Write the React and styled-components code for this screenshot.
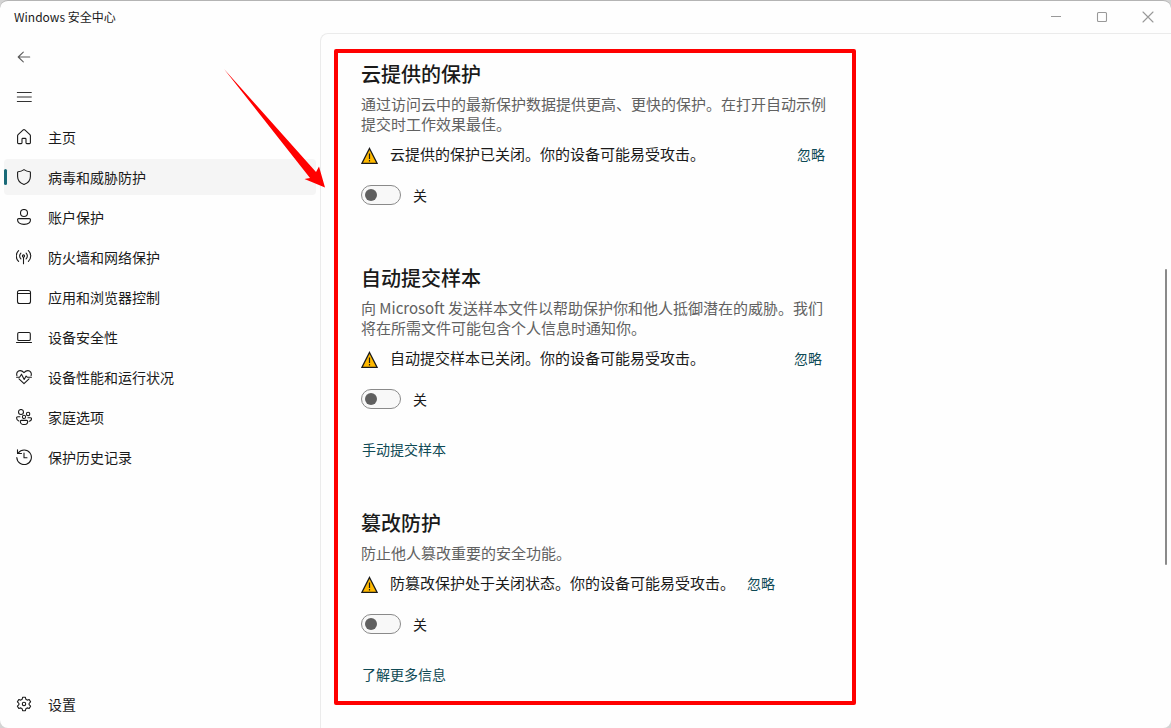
import React from "react";
import styled, { createGlobalStyle } from "styled-components";

const GlobalStyle = createGlobalStyle`
  *, *::before, *::after { box-sizing: border-box; }
  body {
    margin: 0;
    background: #d4d4d4;
    color: #1a1a1a;
    font-family: "Noto Sans CJK SC", "Open Sans", sans-serif;
    font-size: 14px;
    line-height: 20px;
  }
  h2, p { margin: 0; }
`;

const Window = styled.div`
  position: relative;
  display: flex;
  flex-direction: column;
  min-height: 100vh;
  background: #fefefe;
  border-top: 1px solid #b4b4b4;
  border-radius: 8px;
  overflow: hidden;
`;

const TitleBar = styled.header`
  display: flex;
  align-items: center;
  justify-content: space-between;
  height: 32px;
  padding-left: 14px;
  font-size: 12px;
`;

const WindowControls = styled.div`
  display: flex;
`;

const ControlButton = styled.button`
  display: grid;
  place-items: center;
  width: 46px;
  height: 32px;
  padding: 0;
  border: 0;
  background: transparent;
  color: #999999;
`;

const Body = styled.div`
  display: flex;
  flex: 1;
`;

const Sidebar = styled.nav`
  display: flex;
  flex-direction: column;
  flex: none;
  gap: 4px;
  width: 320px;
  padding: 6px 4px;
`;

const IconButton = styled.button`
  display: flex;
  align-items: center;
  width: 40px;
  height: 36px;
  padding: 0 12px;
  border: 0;
  background: transparent;
  color: ${(p) => p.$color};
`;

const NavLink = styled.a`
  position: relative;
  display: flex;
  align-items: center;
  gap: 16px;
  height: 36px;
  padding: 0 12px;
  border-radius: 4px;
  background: ${(p) => (p.$active ? "#f5f5f5" : "transparent")};
  color: inherit;
  text-decoration: none;

  &::before {
    content: "";
    position: absolute;
    left: 0;
    width: 3px;
    height: 16px;
    border-radius: 2px;
    background: ${(p) => (p.$active ? "#1a6a78" : "transparent")};
  }
`;

const Spacer = styled.div`
  flex: 1;
`;

const Content = styled.main`
  display: flex;
  flex: 1;
  justify-content: space-between;
  align-items: stretch;
  border-top: 1px solid #ebebeb;
  border-left: 1px solid #ebebeb;
  border-top-left-radius: 8px;
  padding: 0 4px 0 13px;
`;

const Highlight = styled.div`
  display: flex;
  flex-direction: column;
  align-self: flex-start;
  gap: 49px;
  width: 100%;
  max-width: 522px;
  margin: 15px 0 23px;
  padding: 7px 23px 16px;
  border: 4px solid #ff0000;
  border-radius: 2px;
`;

const Section = styled.section`
  min-width: 0;
`;

const Heading = styled.h2`
  font-size: 20px;
  font-weight: 500;
  line-height: 28px;
`;

const Description = styled.p`
  margin-top: 6px;
  font-size: 15px;
  color: #616161;
`;

const Warning = styled.div`
  display: flex;
  align-items: center;
  justify-content: ${(p) => (p.$inline ? "flex-start" : "space-between")};
  gap: 12px;
  max-width: ${(p) => p.$measure};
  margin-top: 10px;
`;

const WarningMessage = styled.p`
  display: flex;
  align-items: center;
  gap: 12px;
  font-size: 15px;
`;

const TextLink = styled.a`
  color: #0f4a55;
  text-decoration: none;
`;

const ToggleRow = styled.label`
  display: flex;
  align-items: center;
  gap: 12px;
  width: fit-content;
  margin: 21px 0 10px;
`;

const Toggle = styled.input`
  appearance: none;
  display: flex;
  align-items: center;
  width: 40px;
  height: 20px;
  margin: 0;
  padding: 0 3px;
  border: 1px solid #8a8a8a;
  border-radius: 10px;
  background: #f8f8f8;

  &::before {
    content: "";
    width: 12px;
    height: 12px;
    border-radius: 50%;
    background: #5f5f5f;
  }
  &:checked {
    justify-content: flex-end;
  }
`;

const Footer = styled.p`
  margin: 30px 0 1px;
  padding-left: 1px;
`;

const ScrollTrack = styled.div`
  display: grid;
  grid-template-rows: 235fr 296fr 163fr;
  width: 2px;
`;

const ScrollThumb = styled.div`
  grid-row: 2;
  border-radius: 1px;
  background: #8a8a8a;
`;

const Pointer = styled.svg`
  position: absolute;
  left: 220px;
  top: 64px;
  pointer-events: none;
`;

function Icon({ children, size = 16 }) {
  return (
    <svg
      width={size}
      height={size}
      viewBox={`0 0 ${size} ${size}`}
      fill="none"
      stroke="currentColor"
      strokeWidth="1.1"
      strokeLinecap="round"
      strokeLinejoin="round"
      aria-hidden="true"
    >
      {children}
    </svg>
  );
}

const icons = {
  back: <path d="M13.700 8H2.200M7.300 3.100 2.200 8l5.100 4.900" />,
  menu: <path d="M.9 3.5h14.8M.9 8h14.8M.9 12.5h14.8" strokeLinecap="butt" />,
  home: (
    <path d="M1.6 6.7c0-.4.2-.8.5-1L7.2.9c.5-.4 1.1-.4 1.6 0l5.1 4.8c.3.2.5.6.5 1v7c0 .5-.4.9-.9.9h-2.6c-.5 0-.9-.4-.9-.9v-3.5c0-.5-.4-.8-.8-.8H6.8c-.4 0-.8.3-.8.8v3.5c0 .5-.4.9-.9.9H2.5c-.5 0-.9-.4-.9-.9z" />
  ),
  shield: (
    <path d="M8 .6c1.8 1.3 3.7 2 5.9 2.2.3 0 .5.2.5.5v4.2c0 3.8-2.2 6.5-6.4 7.9-4.2-1.4-6.4-4.1-6.4-7.9V3.3c0-.3.2-.5.5-.5C4.3 2.6 6.2 1.900 8 .6z" />
  ),
  account: (
    <>
      <circle cx="8" cy="4" r="3.5" />
      <path d="M2.7 9.600h10.600c.7 0 1.200.5 1.200 1.200 0 2.800-2.700 4.600-6.500 4.600s-6.500-1.800-6.500-4.600c0-.7.5-1.200 1.200-1.200z" />
    </>
  ),
  network: (
    <>
      <circle cx="7.500" cy="7" r="1.100" />
      <path d="M7.500 8.200v6.500M4.900 9.900a4 4 0 0 1 0-5.800M10.100 9.900a4 4 0 0 0 0-5.800M2.600 12.300a7.200 7.200 0 0 1 0-10.600M12.400 12.300a7.200 7.200 0 0 0 0-10.600" />
    </>
  ),
  apps: (
    <>
      <rect x="1.5" y="1.5" width="13" height="13" rx="2" />
      <path d="M1.5 4.5h13" />
    </>
  ),
  device: (
    <>
      <rect x="1.7" y="3.5" width="12.6" height="8" rx="1.3" />
      <path d="M.5 13.5h15" />
    </>
  ),
  health: (
    <>
      <path d="M.9 6.600C.1 4 1.700 1.600 4.100 1.600c1.700 0 2.900.9 3.900 2.100 1-1.200 2.200-2.100 3.900-2.100 2.400 0 4 2.400 3.200 5M3 9.800l5 4.800 5-4.800" />
      <path d="M.6 8.200h3l1.900-3 2.700 5.200 1.900-3.300 1.100 1.100h4.200" />
    </>
  ),
  family: (
    <>
      <circle cx="5" cy="3" r="2.5" />
      <circle cx="12.1" cy="5" r="1.7" />
      <circle cx="8" cy="7.900" r="1.600" />
      <path d="M3.900 7.800H1.800C1 7.800.6 8.300.6 9c0 1.400.8 2.400 2.200 2.900M12 8.800h2.500c.6 0 1 .4 1 1 0 1.200-.8 2.100-2.200 2.500" />
      <path d="M5.300 11.400h5.400c.6 0 1 .4 1 1 0 1.800-1.500 3.100-3.700 3.100s-3.700-1.300-3.700-3.100c0-.6.4-1 1-1z" />
    </>
  ),
  history: (
    <>
      <path d="M2.300 3.800A7.300 7.300 0 1 1 .8 8.500" />
      <path d="M1.500.7v3.800h4M8 4v4.800h3" />
    </>
  ),
  settings: (
    <>
      <circle cx="8" cy="8" r="1.700" />
      <path d="M6.600 1.300h2.800l.5 2 1.300.8 2-.6 1.400 2.400-1.500 1.400v1.400l1.500 1.400-1.400 2.400-2-.6-1.300.8-.5 2H6.600l-.5-2-1.300-.8-2 .6-1.400-2.400 1.500-1.400V7.300L1.400 5.900l1.400-2.400 2 .6 1.300-.8z" />
    </>
  ),
};

const navItems = [
  { icon: "home", label: "主页" },
  { icon: "shield", label: "病毒和威胁防护", active: true },
  { icon: "account", label: "账户保护" },
  { icon: "network", label: "防火墙和网络保护" },
  { icon: "apps", label: "应用和浏览器控制" },
  { icon: "device", label: "设备安全性" },
  { icon: "health", label: "设备性能和运行状况" },
  { icon: "family", label: "家庭选项" },
  { icon: "history", label: "保护历史记录" },
];

const sections = [
  {
    title: "云提供的保护",
    description:
      "通过访问云中的最新保护数据提供更高、更快的保护。在打开自动示例提交时工作效果最佳。",
    warning: "云提供的保护已关闭。你的设备可能易受攻击。",
    measure: "464px",
  },
  {
    title: "自动提交样本",
    description:
      "向 Microsoft 发送样本文件以帮助保护你和他人抵御潜在的威胁。我们将在所需文件可能包含个人信息时通知你。",
    warning: "自动提交样本已关闭。你的设备可能易受攻击。",
    measure: "461px",
    link: "手动提交样本",
  },
  {
    title: "篡改防护",
    description: "防止他人篡改重要的安全功能。",
    warning: "防篡改保护处于关闭状态。你的设备可能易受攻击。",
    measure: "464px",
    inline: true,
    link: "了解更多信息",
  },
];

function WarningIcon() {
  return (
    <svg width="17" height="20" viewBox="0 0 17 20" aria-hidden="true">
      <path d="M8.5 4.500 16 19.300H1z" fill="#ffb900" stroke="#1a1a1a" strokeWidth="1.300" />
      <path d="M8.500 9.500v5.500M8.500 16v1.500" stroke="#1a1a1a" strokeWidth="1.200" />
    </svg>
  );
}

function NavItem({ icon, label, active }) {
  return (
    <NavLink href="#" $active={active} aria-current={active ? "page" : undefined}>
      <Icon>{icons[icon]}</Icon>
      {label}
    </NavLink>
  );
}

function ProtectionSection({ title, description, warning, measure, inline, link }) {
  return (
    <Section>
      <Heading>{title}</Heading>
      <Description>{description}</Description>
      <Warning $inline={inline} $measure={measure}>
        <WarningMessage>
          <WarningIcon />
          {warning}
        </WarningMessage>
        <TextLink href="#">忽略</TextLink>
      </Warning>
      <ToggleRow>
        <Toggle type="checkbox" role="switch" />
        关
      </ToggleRow>
      {link && (
        <Footer>
          <TextLink href="#">{link}</TextLink>
        </Footer>
      )}
    </Section>
  );
}

export default function App() {
  return (
    <>
      <GlobalStyle />
      <Window>
        <TitleBar>
          Windows 安全中心
          <WindowControls>
            <ControlButton aria-label="最小化">
              <Icon size={12}><path d="M1 5.500h10" strokeLinecap="butt" /></Icon>
            </ControlButton>
            <ControlButton aria-label="最大化">
              <Icon size={12}><rect x="1.500" y="1.500" width="9" height="9" rx="1" /></Icon>
            </ControlButton>
            <ControlButton aria-label="关闭">
              <Icon size={12}><path d="m1 1 10 10M11 1 1 11" /></Icon>
            </ControlButton>
          </WindowControls>
        </TitleBar>
        <Body>
          <Sidebar>
            <IconButton aria-label="返回" $color="#5c5c5c">
              <Icon>{icons.back}</Icon>
            </IconButton>
            <IconButton aria-label="导航" $color="#333333">
              <Icon>{icons.menu}</Icon>
            </IconButton>
            {navItems.map((item) => (
              <NavItem key={item.label} {...item} />
            ))}
            <Spacer />
            <NavItem icon="settings" label="设置" />
          </Sidebar>
          <Content>
            <Highlight>
              {sections.map((section) => (
                <ProtectionSection key={section.title} {...section} />
              ))}
            </Highlight>
            <ScrollTrack>
              <ScrollThumb />
            </ScrollTrack>
          </Content>
        </Body>
        <Pointer width="110" height="126" viewBox="0 0 110 126" aria-hidden="true">
          <path d="M4 4 96 107 99 101.500 105 122.500 84.500 114 90 113z" fill="#ff0000" />
        </Pointer>
      </Window>
    </>
  );
}
